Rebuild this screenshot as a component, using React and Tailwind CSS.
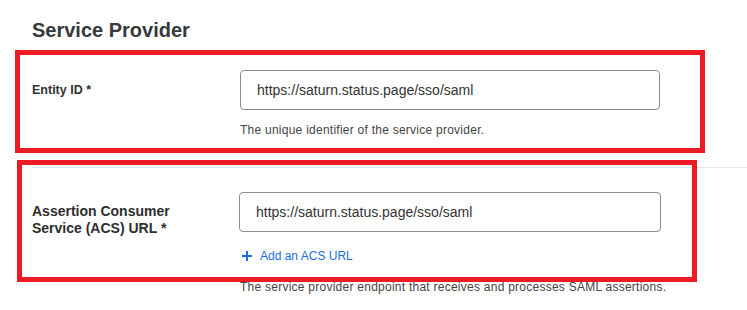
import React from "react";

const URL_VALUE = "https://saturn.status.page/sso/saml";

function PlusIcon() {
  return (
    <svg width="12" height="12" viewBox="0 0 12 12" className="shrink-0">
      <path d="M6 1v10M1 6h10" stroke="#1a6ee6" strokeWidth="2" fill="none" />
    </svg>
  );
}

export default function App() {
  return (
    <div
      className="relative w-[747px] h-[310px] overflow-hidden bg-white text-[#333]"
      style={{ fontFamily: '"Liberation Sans", Arial, sans-serif' }}
    >
      <h2 className="pt-4 pl-8 text-[20px] leading-[28px] font-bold text-[#363a3d]">
        Service Provider
      </h2>

      {/* Entity ID */}
      <div className="mt-[26px] pl-8 pb-[29px]">
        <div className="flex">
          <div className="w-[208px] h-10 flex items-center text-[12.5px] font-bold text-[#333]">
            Entity ID *
          </div>
          <div className="w-[420px] h-10 flex items-center pl-4 border border-[#8c8c8c] rounded-[4px] text-[14px] text-[#333]">
            {URL_VALUE}
          </div>
        </div>
        <p className="ml-[208px] mt-3 text-[12px] leading-4 tracking-[0.25px] text-[#444]">
          The unique identifier of the service provider.
        </p>
      </div>

      {/* ACS URL */}
      <div className="ml-[31px] border-t border-[#e6e6e6] pt-[24px] pl-[1px]">
        <div className="flex">
          <div className="w-[207px] pt-[11px] text-[14px] leading-[17px] font-bold text-[#2e2e2e]">
            Assertion Consumer
            <br />
            Service (ACS) URL *
          </div>
          <div>
            <div className="w-[422px] h-10 flex items-center pl-4 border border-[#8c8c8c] rounded-[4px] text-[14px] text-[#333]">
              {URL_VALUE}
            </div>
            <div className="mt-4 ml-[2px] flex items-center gap-[7px] text-[12px] leading-4 text-[#1a6ee6]">
              <PlusIcon />
              <span>Add an ACS URL</span>
            </div>
            <p className="mt-[15px] ml-[1px] text-[12px] leading-4 tracking-[0.25px] text-[#444]">
              The service provider endpoint that receives and processes SAML assertions.
            </p>
          </div>
        </div>
      </div>

      {/* annotation boxes */}
      <div className="absolute left-[15px] top-[50px] w-[690px] h-[103px] border-[5px] border-[#ed1c24]" />
      <div className="absolute left-[17px] top-[160px] w-[680px] h-[122px] border-[5px] border-[#ed1c24]" />
    </div>
  );
}
